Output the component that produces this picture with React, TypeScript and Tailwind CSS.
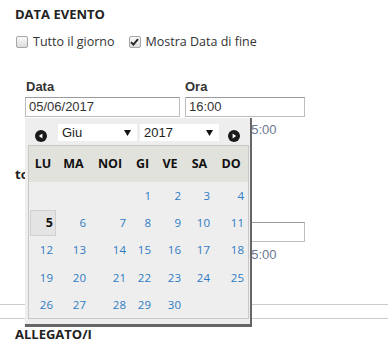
import type { ReactNode } from "react"

const SANS = "font-['Open_Sans',sans-serif]"
const ARIAL = "font-['Liberation_Sans',Arial,sans-serif]"

const dayNames = ["LU", "MA", "NOI", "GI", "VE", "SA", "DO"]

const weeks: (number | null)[][] = [
  [null, null, null, 1, 2, 3, 4],
  [5, 6, 7, 8, 9, 10, 11],
  [12, 13, 14, 15, 16, 17, 18],
  [19, 20, 21, 22, 23, 24, 25],
  [26, 27, 28, 29, 30, null, null],
]

const SELECTED = 5

function Checkbox({ checked }: { checked?: boolean }) {
  return (
    <span className="relative flex h-[12px] w-[12px] items-center justify-center rounded-[2px] border border-[#a6a6a6] bg-gradient-to-b from-[#fafafa] to-[#dcdcdc]">
      {checked && (
        <svg width="9" height="8" viewBox="0 0 9 8">
          <path d="M1 4.2 L3.4 6.6 L8 1.2" fill="none" stroke="#222" strokeWidth="1.8" />
        </svg>
      )}
    </span>
  )
}

function NavArrow({ dir }: { dir: "prev" | "next" }) {
  return (
    <svg width="12" height="12" viewBox="0 0 12 12" className="mt-[6px] shrink-0">
      <circle cx="6" cy="6" r="6" fill="#1a1a1a" />
      {dir === "prev" ? (
        <polygon points="7.4,3.4 7.4,8.6 3.8,6" fill="#fff" />
      ) : (
        <polygon points="4.6,3.4 4.6,8.6 8.2,6" fill="#fff" />
      )}
    </svg>
  )
}

function FakeSelect({ value }: { value: string }) {
  return (
    <div className={`flex h-[17px] w-[79px] shrink-0 items-center justify-between bg-white pl-[4px] pr-[6px] text-[13px] text-[#222] ${ARIAL}`}>
      <span>{value}</span>
      <svg width="7" height="6" viewBox="0 0 7 6">
        <polygon points="0,0 7,0 3.5,6" fill="#111" />
      </svg>
    </div>
  )
}

function TextInput({ value }: { value?: string }) {
  return (
    <div className={`flex h-[20px] items-center border border-[#bdbdbd] border-t-[#9a9a9a] bg-white px-[3px] text-[13px] text-[#333] ${ARIAL}`}>
      {value}
    </div>
  )
}

// labels of the second row sit under the open picker, so they are left out
function DateRow({ date, time, showLabels }: { date?: string; time?: string; showLabels?: boolean }): ReactNode {
  const label = `h-[16px] text-[13px] font-bold leading-[16px] text-[#333] ${ARIAL}`
  return (
    <div className="grid grid-cols-[155px_120px] gap-x-[5px] pl-[25px]">
      <div className={`${label} pl-[1px]`}>{showLabels && "Data"}</div>
      <div className={label}>{showLabels && "Ora"}</div>
      <div className="mt-[2px]">
        <TextInput value={date} />
      </div>
      <div className="mt-[2px]">
        <TextInput value={time} />
      </div>
      <div />
      <div className={`mt-[5px] h-[16px] pl-[59px] text-[13px] leading-[16px] text-[#6b7894] ${ARIAL}`}>15:00</div>
    </div>
  )
}

function DatePicker() {
  return (
    <div className="absolute left-[25px] top-[118px] h-[209px] w-[227px] border-b-[3px] border-r-[2px] border-[#666] bg-[#eeeeee] pl-[3px] pt-[6px]">
      {/* month / year navigation */}
      <div className="flex h-[17px] items-start">
        <div className="ml-[7px]">
          <NavArrow dir="prev" />
        </div>
        <div className="ml-[11px]">
          <FakeSelect value="Giu" />
        </div>
        <div className="ml-[3px]">
          <FakeSelect value="2017" />
        </div>
        <div className="ml-[9px]">
          <NavArrow dir="next" />
        </div>
      </div>

      {/* calendar */}
      <div className={`mt-[4px] w-[221px] border border-[#c8c8c8] ${SANS}`}>
        <div className="grid h-[36px] grid-cols-[28px_33px_40px_25px_30px_29px_34px] items-center bg-[#e2e2dd] text-[12.5px] font-bold text-[#111]">
          {dayNames.map((d) => (
            <div key={d} className="text-center">
              {d}
            </div>
          ))}
        </div>
        {weeks.map((week, wi) => (
          <div key={wi} className="grid h-[27.2px] grid-cols-[28px_33px_40px_25px_30px_29px_34px] text-[11.5px]">
            {week.map((day, di) => (
              <div key={di} className="flex">
                {day !== null &&
                  (day === SELECTED ? (
                    <span className="mx-[1px] mt-[1px] flex flex-1 items-center justify-end border border-[#d0d0d0] bg-[#e4e4e4] pr-[2px] text-[12.5px] font-bold text-[#111]">
                      {day}
                    </span>
                  ) : (
                    <span className="mx-[1px] flex flex-1 items-center justify-end pr-[3px] text-[#2f7bc4]">{day}</span>
                  ))}
              </div>
            ))}
          </div>
        ))}
      </div>
    </div>
  )
}

export default function App() {
  return (
    <div className="relative h-[357px] w-[388px] overflow-hidden bg-white text-[#333]">
      <div className="pl-[15px] pt-[5px]">
        <h2 className={`h-[18px] text-[13px] font-bold leading-[18px] text-[#222] ${SANS}`}>DATA EVENTO</h2>
      </div>

      <div className={`mt-[10px] flex h-[18px] items-center pl-[16px] text-[12.5px] text-[#333] ${SANS}`}>
        <Checkbox />
        <span className="ml-[5px]">Tutto il giorno</span>
        <span className="ml-[14px]">
          <Checkbox checked />
        </span>
        <span className="ml-[5px]">Mostra Data di fine</span>
      </div>

      <div className="mt-[28px]">
        <DateRow date="05/06/2017" time="16:00" showLabels />
      </div>

      <div className={`mt-[27px] h-[18px] pl-[15px] text-[13px] font-bold leading-[18px] text-[#222] ${SANS}`}>to</div>

      <div className="mt-[21px]">
        <DateRow />
      </div>

      <div className="mt-[41px] border-t border-[#cccccc]" />
      <div className="mt-[13px] border-t border-[#cccccc]" />

      <div className={`mt-[6px] h-[18px] pl-[15px] text-[13px] font-bold leading-[18px] text-[#222] ${SANS}`}>ALLEGATO/I</div>

      <DatePicker />
    </div>
  )
}
